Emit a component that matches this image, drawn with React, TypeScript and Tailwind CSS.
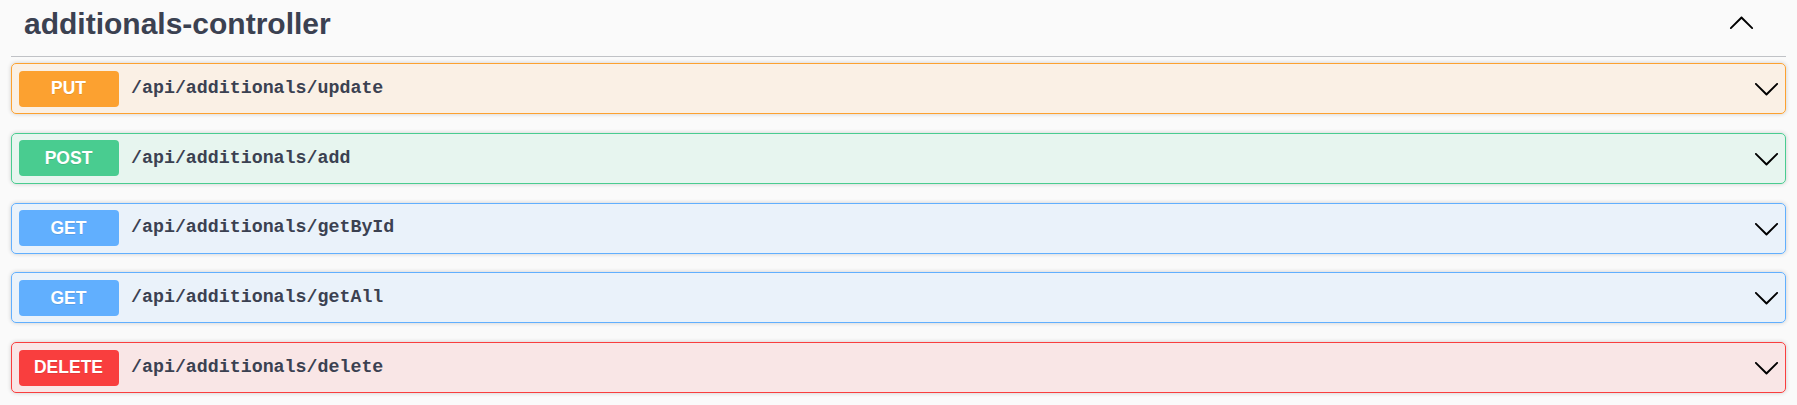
import React from "react";

type Method = "PUT" | "POST" | "GET" | "DELETE";

const styles: Record<Method, { block: string; badge: string }> = {
  PUT: { block: "border-[#fca130] bg-[rgba(252,161,48,0.1)]", badge: "bg-[#fca130]" },
  POST: { block: "border-[#49cc90] bg-[rgba(73,204,144,0.1)]", badge: "bg-[#49cc90]" },
  GET: { block: "border-[#61affe] bg-[rgba(97,175,254,0.1)]", badge: "bg-[#61affe]" },
  DELETE: { block: "border-[#f93e3e] bg-[rgba(249,62,62,0.1)]", badge: "bg-[#f93e3e]" },
};

const operations: { method: Method; path: string }[] = [
  { method: "PUT", path: "/api/additionals/update" },
  { method: "POST", path: "/api/additionals/add" },
  { method: "GET", path: "/api/additionals/getById" },
  { method: "GET", path: "/api/additionals/getAll" },
  { method: "DELETE", path: "/api/additionals/delete" },
];

const Arrow = ({ up = false }: { up?: boolean }) => (
  <svg
    width="27"
    height="27"
    viewBox="0 0 20 20"
    className={up ? "rotate-180 shrink-0" : "shrink-0"}
    fill="#000"
  >
    <path d="M17.418 6.109c.272-.268.709-.268.979 0s.271.701 0 .969l-7.908 7.83c-.27.268-.707.268-.979 0l-7.908-7.83c-.27-.268-.27-.701 0-.969.271-.268.709-.268.979 0L10 13.25l7.418-7.141z" />
  </svg>
);

const App = () => {
  return (
    <div className="min-h-[405px] w-full bg-[#fafafa] px-[11px]">
      <h3 className="flex items-center justify-between border-b border-[rgba(59,65,81,0.3)] pt-[6px] pb-[15px] pl-[13px] pr-[31px] font-['Liberation_Sans',Arial,sans-serif] text-[30px] leading-[35px] font-bold text-[#3b4151]">
        <span>additionals-controller</span>
        <Arrow up />
      </h3>
      <div className="pt-[6px]">
        {operations.map((op) => (
          <div
            key={op.path}
            className={`mb-[18.75px] rounded-[5px] border shadow-[0_0_4px_rgba(0,0,0,0.19)] ${styles[op.method].block}`}
          >
            <div className="flex items-center py-[6.5px] pl-[6.5px] pr-[5px]">
              <span
                className={`flex h-[36px] w-[100px] shrink-0 items-center justify-center rounded-[4px] font-['Liberation_Sans',Arial,sans-serif] text-[17.5px] font-bold text-white [text-shadow:0_1px_0_rgba(0,0,0,0.1)] ${styles[op.method].badge}`}
              >
                {op.method}
              </span>
              <span className="flex-1 px-[12.5px] font-['Liberation_Mono',monospace] text-[18.3px] font-bold text-[#3b4151]">
                {op.path}
              </span>
              <Arrow />
            </div>
          </div>
        ))}
      </div>
    </div>
  );
};

export default App;
